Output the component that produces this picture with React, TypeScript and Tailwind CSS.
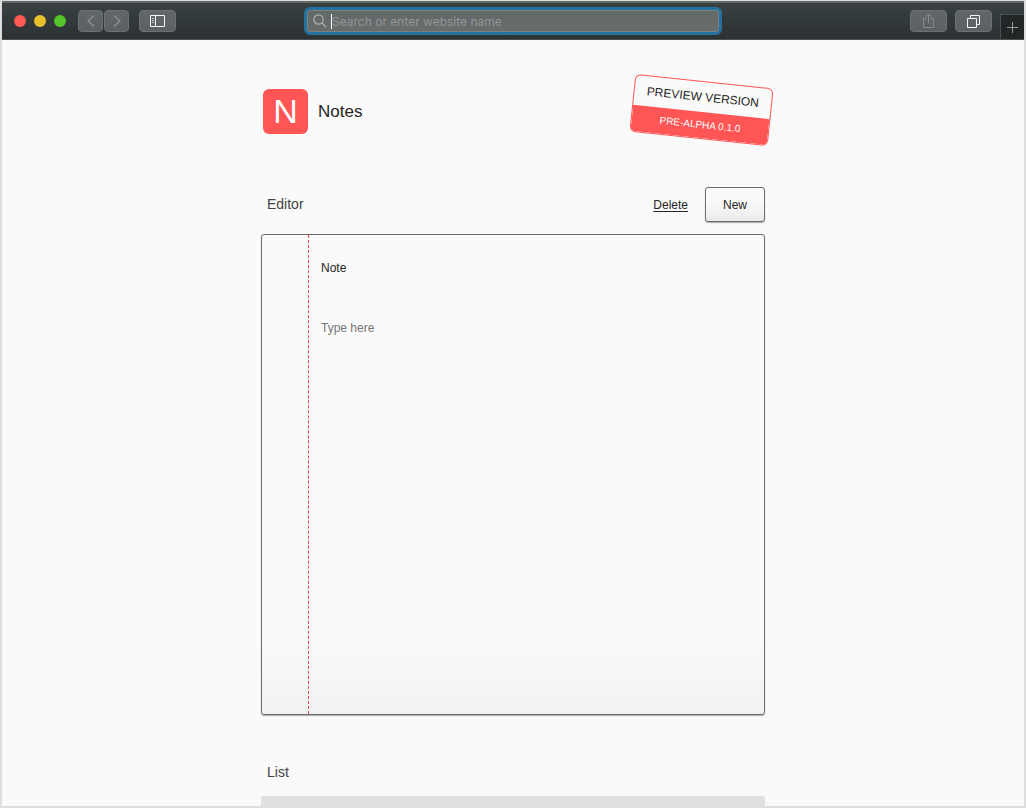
import type { ReactNode } from "react";

const toolButton =
  "flex h-[22px] items-center justify-center rounded-[4px] border border-[#6a7073] bg-linear-to-b from-[#606669] to-[#5b6063]";

function ToolButton({ label, wide, children }: { label: string; wide?: boolean; children: ReactNode }) {
  return (
    <button type="button" aria-label={label} className={`${toolButton} ${wide ? "w-[37px]" : "w-[25px]"}`}>
      {children}
    </button>
  );
}

function Toolbar() {
  return (
    <header className="grid h-[39px] shrink-0 grid-cols-[1fr_minmax(0,418px)_1fr] items-center border-t-2 border-b border-t-[#626866] border-b-[#4b4e4e] bg-linear-to-b from-[#394143] to-[#2c3132]">
      <div className="flex items-center pl-3">
        <div className="flex gap-2">
          <span className="size-3 rounded-full bg-[#ff5b53]" />
          <span className="size-3 rounded-full bg-[#e6c02b]" />
          <span className="size-3 rounded-full bg-[#54c62c]" />
        </div>
        <div className="ml-3 flex gap-px">
          <ToolButton label="Back">
            <svg width="10" height="14" viewBox="0 0 10 14" fill="none" stroke="#8d9294" strokeWidth="1.3">
              <path d="M8 1.500 2 7l6 5.500" />
            </svg>
          </ToolButton>
          <ToolButton label="Forward">
            <svg width="10" height="14" viewBox="0 0 10 14" fill="none" stroke="#8d9294" strokeWidth="1.3">
              <path d="m2 1.500 6 5.500-6 5.500" />
            </svg>
          </ToolButton>
        </div>
        <div className="ml-[10px]">
          <ToolButton label="Show sidebar" wide>
            <svg width="15" height="12" viewBox="0 0 15 12" fill="none" stroke="#f4f5f5">
              <path d="M.5.5h14v11H.5zM5.500.5v11" />
              <path d="M2 3.500h2M2 5.500h2M2 7.500h2" stroke="#c4c7c8" />
            </svg>
          </ToolButton>
        </div>
      </div>
      <label className="flex h-7 items-center rounded-md border-[3px] border-[#26709f] bg-linear-to-b from-[#626768] to-[#6a6d6c] pl-1.5 inset-ring inset-ring-[#7a8183]">
        <svg width="14" height="14" viewBox="0 0 14 14" fill="none" stroke="#b0b4b5" strokeWidth="1.2">
          <circle cx="5.500" cy="5.500" r="4.600" />
          <path d="m9 9 4 4" />
        </svg>
        <span className="ml-1 h-[15px] w-px bg-white" />
        <input
          type="text"
          aria-label="Address"
          placeholder="Search or enter website name"
          className="min-w-0 flex-1 bg-transparent pt-px font-['Inter',sans-serif] text-[12px] text-white outline-none placeholder:text-[#929697]"
        />
      </label>
      <div className="flex items-center justify-end gap-2 self-stretch">
        <ToolButton label="Share" wide>
          <svg width="13" height="16" viewBox="0 0 13 16" fill="none" stroke="#85898b">
            <path d="M4.500 5.500h-3v9h10v-9h-3M6.500 10.500V1.200M3.500 4l3-3 3 3" />
          </svg>
        </ToolButton>
        <ToolButton label="Show all tabs" wide>
          <svg width="13" height="13" viewBox="0 0 13 13" fill="none" stroke="#f4f5f5">
            <path d="M.5 3.500h9v9h-9zM3.500 3.500v-3h9v9h-3" />
          </svg>
        </ToolButton>
        <button
          type="button"
          aria-label="New tab"
          className="flex h-[25px] w-6 items-center justify-center self-end border-t border-l border-[#4a5052] bg-[#212626]"
        >
          <svg width="11" height="11" viewBox="0 0 11 11" stroke="#989c9d">
            <path d="M5.500 0v11M0 5.500h11" />
          </svg>
        </button>
      </div>
    </header>
  );
}

function Stamp() {
  return (
    <div className="w-[139px] rotate-6 overflow-hidden rounded-md border border-[#ff5555] text-center">
      <p className="text-[12px] leading-[30px] text-[#252525]">PREVIEW VERSION</p>
      <p className="bg-[#ff5555] text-[10px] leading-[26px] text-white">PRE-ALPHA 0.1.0</p>
    </div>
  );
}

export default function App() {
  return (
    <div className="flex h-screen flex-col overflow-hidden border-x-2 border-t border-b-2 border-[#dedede] bg-[#fafafa] font-['Liberation_Sans',Arial,sans-serif] text-[#252525]">
      <Toolbar />
      <main className="flex-1 overflow-y-auto px-4 pt-[49px] [scrollbar-width:none]">
        <div className="mx-auto max-w-[504px]">
          <div className="flex h-[45px] items-center justify-between pl-0.5">
            <div className="flex items-center gap-[10px]">
              <span className="flex size-[45px] items-center justify-center rounded-md bg-[#ff5555] text-[34px] text-white">
                N
              </span>
              <h1 className="text-[17px]">Notes</h1>
            </div>
            <div className="-mr-1.5 pb-1">
              <Stamp />
            </div>
          </div>

          <section className="mt-[53px]">
            <div className="flex h-[35px] items-center justify-between pl-1.5">
              <h2 className="text-[14px] leading-[35px] text-[#444444]">Editor</h2>
              <div className="flex items-center gap-[17px] text-[12px]">
                <button type="button" className="underline underline-offset-2">
                  Delete
                </button>
                <button
                  type="button"
                  className="h-[35px] w-[60px] rounded-[3px] border border-[#6b6b6b] bg-linear-to-b from-[#fafafa] from-40% to-[#ebebeb] shadow-[0_1px_1px_#aaaaaa]"
                >
                  New
                </button>
              </div>
            </div>
            <div className="mt-3 flex h-[481px] rounded-[3px] border border-[#6b6b6b] bg-linear-to-b from-[#fafafa] from-85% to-[#f2f2f2] pl-[46px] shadow-[0_1px_1px_#aaaaaa]">
              <div className="flex flex-1 flex-col border-l border-dashed border-[#ee4444] px-3 pt-6 text-[12px] leading-[18px]">
                <input
                  type="text"
                  aria-label="Title"
                  defaultValue="Note"
                  className="bg-transparent outline-none"
                />
                <textarea
                  aria-label="Note text"
                  placeholder="Type here"
                  className="mt-[42px] flex-1 resize-none bg-transparent outline-none placeholder:text-[#777777]"
                />
              </div>
            </div>
          </section>

          <section className="mt-10">
            <h2 className="pl-1.5 text-[14px] leading-[35px] text-[#444444]">List</h2>
            <div className="mt-1.5 h-[60px] rounded-[3px] bg-[#e0e0e0]" />
          </section>
        </div>
      </main>
    </div>
  );
}
